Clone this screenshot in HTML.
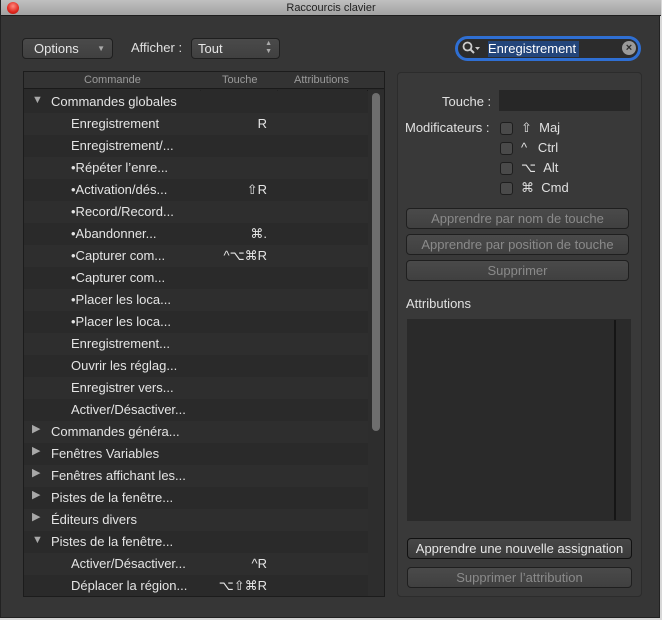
<!DOCTYPE html>
<html><head><meta charset="utf-8"><style>
*{margin:0;padding:0;box-sizing:border-box}
body{width:662px;height:620px;background:#d8d8d8;font-family:"Liberation Sans","DejaVu Sans",sans-serif;font-size:13px;color:#e0e0e0;position:relative;overflow:hidden}
.win{position:absolute;left:0;top:0;width:660px;height:618px;background:#363636;border:1px solid #222;border-top:none}
.title{position:absolute;left:0;top:0;width:660px;height:16px;background:linear-gradient(#c0c0c0,#a2a2a2);border-bottom:1px solid #1e1e1e;color:#222;font-size:11px;text-align:center;line-height:16px}
.close{position:absolute;left:6px;top:2px;width:12px;height:12px;border-radius:50%;background:radial-gradient(circle at 50% 35%,#ff8a80,#e0261d 60%,#a0140e);}
.a{position:absolute}
.btn{position:absolute;background:linear-gradient(#4a4a4a,#404040);border:1px solid #1f1f1f;border-radius:4px;color:#e6e6e6;font-size:13px}
.tbl{position:absolute;left:22px;top:71px;width:362px;height:526px;background:#2a2a2a;border:1px solid #1c1c1c;overflow:hidden}
.hdr{position:absolute;left:0;top:0;width:360px;height:17px;background:#333;border-bottom:1px solid #1a1a1a;color:#9a9a9a;font-size:11px;line-height:16px}
.row{position:absolute;left:0;width:344px;height:22px;line-height:22px;font-size:13px;color:#e4e4e4}
.row span{position:absolute}
.k{right:101px;text-align:right}
.tri{position:absolute;left:8px;color:#a8a8a8;font-size:11px}
.panel{position:absolute;left:396px;top:72px;width:245px;height:525px;background:#393939;border:1px solid #2c2c2c;border-radius:4px}
.cb{position:absolute;width:13px;height:13px;border:1px solid #1e1e1e;border-radius:3px;background:#4a4a4a}
.dis{color:#8a8a8a}
</style></head><body>
<div class="win">
<div class="title"><div class="close"></div>Raccourcis clavier</div>

<div class="btn" style="left:21px;top:38px;width:91px;height:21px;line-height:19px;padding-left:11px">Options<span style="position:absolute;right:7px;top:0;font-size:8px;color:#aaa">▼</span></div>
<div class="a" style="left:130px;top:40px;font-size:13px">Afficher :</div>
<div class="btn" style="left:190px;top:38px;width:89px;height:21px;line-height:19px;padding-left:6px">Tout<span style="position:absolute;right:7px;top:1px;font-size:7px;line-height:8px;color:#aaa">▲<br>▼</span></div>

<div class="a" style="left:454px;top:36px;width:186px;height:25px;border:3px solid #2f6fd3;border-radius:13px;background:#2c2c2c"></div>
<div class="a" style="left:460px;top:39px;width:20px;height:18px"><svg width="20" height="18"><circle cx="6.5" cy="7.5" r="4" stroke="#ccc" stroke-width="1.8" fill="none"/><line x1="9.5" y1="10.5" x2="13" y2="14" stroke="#ccc" stroke-width="2"/><path d="M14 8 L19 8 L16.5 11 Z" fill="#ccc"/></svg></div>
<div class="a" style="left:487px;top:41px;width:91px;height:16px;background:#23457a;color:#fff;font-size:13px;line-height:16px">Enregistrement</div>
<div class="a" style="left:621px;top:41px;width:14px;height:14px;border-radius:50%;background:#9a9a9a;color:#2c2c2c;font-size:11px;line-height:14px;text-align:center;font-weight:bold">×</div>

<div class="tbl">
<div class="hdr"><span style="position:absolute;left:60px">Commande</span><span style="position:absolute;left:198px">Touche</span><span style="position:absolute;left:270px">Attributions</span></div>
<div style="position:absolute;left:176px;top:18px;width:1px;height:510px;background:#222"></div>
<div style="position:absolute;left:253px;top:18px;width:1px;height:510px;background:#222"></div>
<div style="position:absolute;left:343px;top:18px;width:17px;height:510px;background:#2d2d2d;border-left:1px solid #1a1a1a"></div>
<div style="position:absolute;left:348px;top:21px;width:8px;height:338px;background:#6e6e6e;border-radius:4px"></div>
<div id="rows"></div>
</div>

<div class="panel">
<div class="a" style="left:44px;top:21px">Touche :</div>
<div class="a" style="left:101px;top:17px;width:131px;height:21px;background:#272727"></div>
<div class="a" style="left:7px;top:47px">Modificateurs :</div>
<div class="cb" style="left:102px;top:49px"></div><div class="a" style="left:123px;top:47px">⇧&nbsp;&nbsp;Maj</div>
<div class="cb" style="left:102px;top:69px"></div><div class="a" style="left:123px;top:67px">^&nbsp;&nbsp;&nbsp;Ctrl</div>
<div class="cb" style="left:102px;top:89px"></div><div class="a" style="left:123px;top:87px">⌥&nbsp;&nbsp;Alt</div>
<div class="cb" style="left:102px;top:109px"></div><div class="a" style="left:123px;top:107px">⌘&nbsp;&nbsp;Cmd</div>
<div class="btn dis" style="left:8px;top:135px;width:223px;height:21px;line-height:19px;text-align:center">Apprendre par nom de touche</div>
<div class="btn dis" style="left:8px;top:161px;width:223px;height:21px;line-height:19px;text-align:center">Apprendre par position de touche</div>
<div class="btn dis" style="left:8px;top:187px;width:223px;height:21px;line-height:19px;text-align:center">Supprimer</div>
<div class="a" style="left:8px;top:223px">Attributions</div>
<div class="a" style="left:9px;top:246px;width:224px;height:202px;background:#2a2a2a"></div>
<div class="a" style="left:216px;top:247px;width:2px;height:200px;background:#151515"></div>
<div class="btn" style="left:9px;top:465px;width:225px;height:21px;line-height:19px;text-align:center;background:linear-gradient(#474747,#3a3a3a);border-color:#111">Apprendre une nouvelle assignation</div>
<div class="btn dis" style="left:9px;top:494px;width:225px;height:21px;line-height:19px;text-align:center">Supprimer l’attribution</div>
</div>
</div>
<script>
var d=[["t","Commandes globales",""],["c","Enregistrement","R"],["c","Enregistrement/...",""],["c","•Répéter l’enre...",""],["c","•Activation/dés...","⇧R"],["c","•Record/Record...",""],["c","•Abandonner...","⌘."],["c","•Capturer com...","^⌥⌘R"],["c","•Capturer com...",""],["c","•Placer les loca...",""],["c","•Placer les loca...",""],["c","Enregistrement...",""],["c","Ouvrir les réglag...",""],["c","Enregistrer vers...",""],["c","Activer/Désactiver...",""],["r","Commandes généra...",""],["r","Fenêtres Variables",""],["r","Fenêtres affichant les...",""],["r","Pistes de la fenêtre...",""],["r","Éditeurs divers",""],["t","Pistes de la fenêtre...",""],["c","Activer/Désactiver...","^R"],["c","Déplacer la région...","⌥⇧⌘R"]];
var h="";d.forEach(function(r,i){var y=19+i*22;var bg=i%2?"#2e2e2e":"#2a2a2a";h+='<div class="row" style="top:'+y+'px;background:'+bg+'">';
if(r[0]=="t")h+='<span class="tri" style="top:-2px">▼</span>';if(r[0]=="r")h+='<span class="tri" style="top:-3px">▶</span>';
h+='<span style="left:'+(r[0]=="c"?47:27)+'px">'+r[1]+'</span><span class="k">'+r[2]+'</span></div>';});
document.getElementById("rows").innerHTML=h;
</script>
</body></html>
